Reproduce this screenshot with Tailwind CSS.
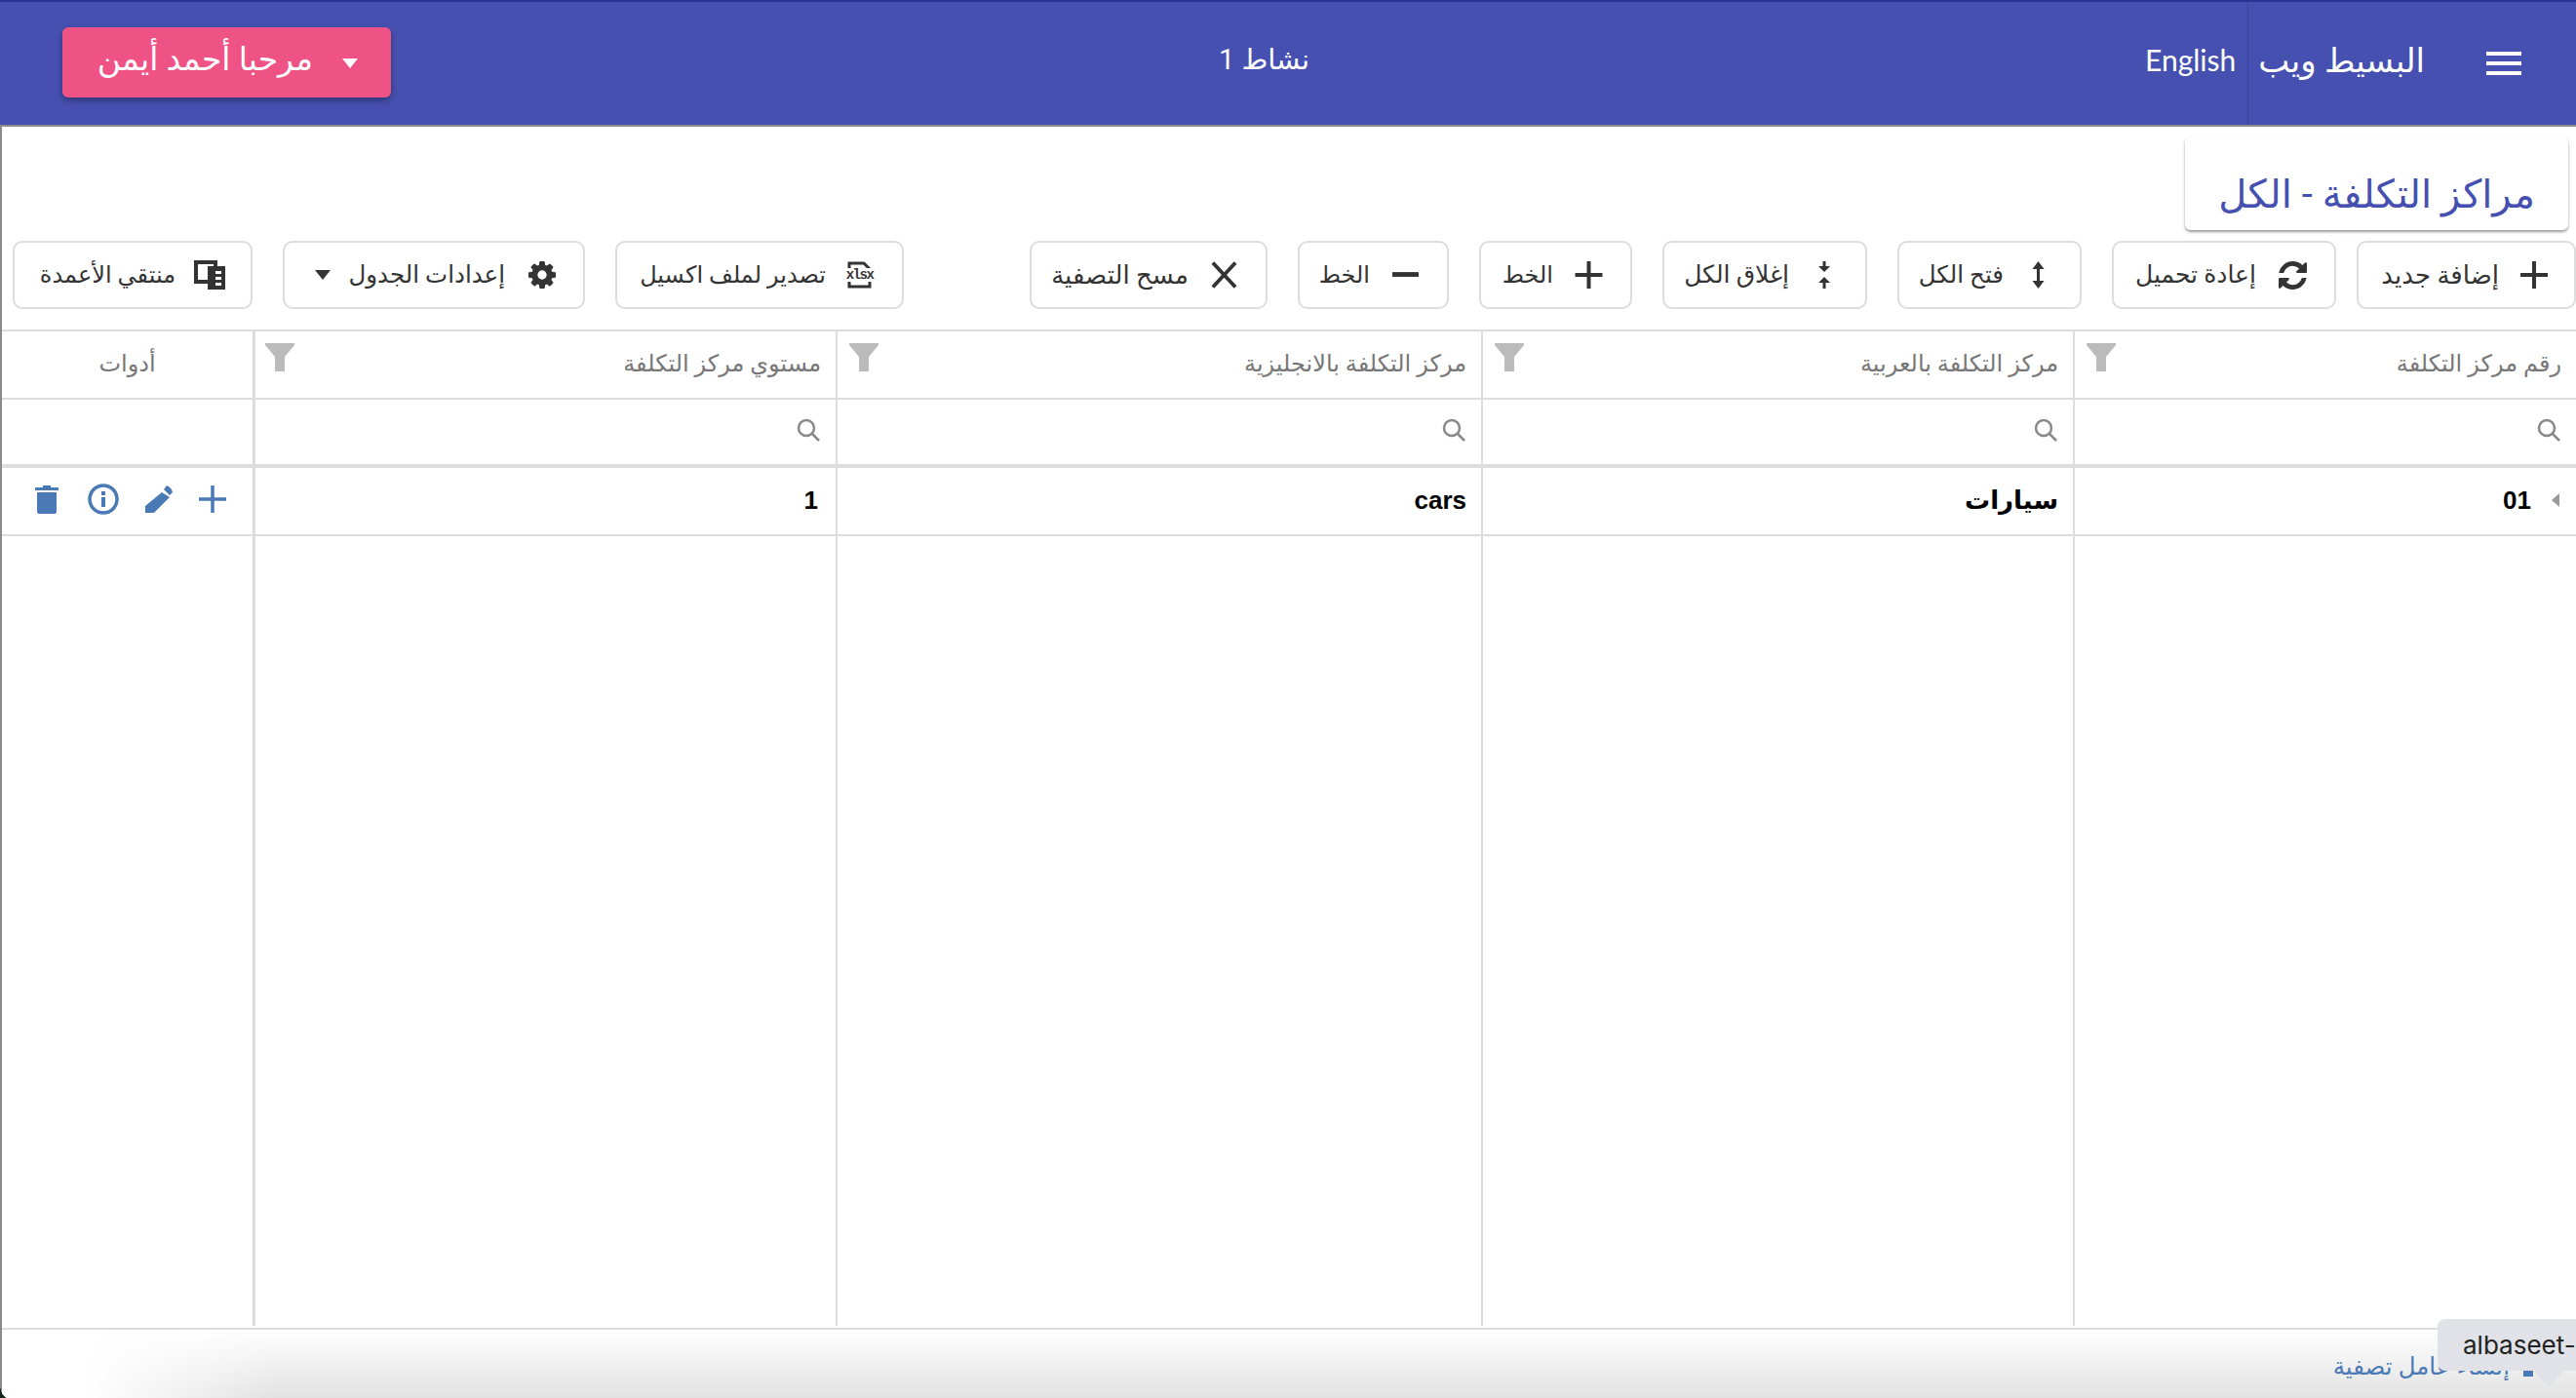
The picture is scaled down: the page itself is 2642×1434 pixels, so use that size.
<!DOCTYPE html>
<html lang="ar" dir="rtl">
<head>
<meta charset="utf-8">
<script src="https://cdn.jsdelivr.net/npm/@tailwindcss/browser@4"></script>
<title>مراكز التكلفة</title>
</head>
<body class="bg-white font-['Roboto','Noto_Sans','DejaVu_Sans',sans-serif]">
<div class="relative w-[2642px] h-[1434px] overflow-hidden bg-white">
  <!-- App bar -->
  <header class="h-[130px] bg-[#4550b0] border-t-2 border-t-[#2a3593] border-b-2 border-b-[#8a8a8a] flex items-center text-white">
    <button class="w-[92px] h-full flex items-center justify-start pr-[56px] shrink-0" aria-label="menu">
      <svg class="shrink-0" width="36" height="24" viewBox="0 0 36 24" fill="#fff"><rect width="36" height="4"/><rect y="10" width="36" height="4"/><rect y="20" width="36" height="4"/></svg>
    </button>
    <div class="text-[34px] leading-none mr-[63px] whitespace-nowrap w-[170px] text-center pb-[6px]">البسيط ويب</div>
    <div class="w-[1px] h-full bg-[#3a4498] mr-[11px]"></div>
    <div class="text-[30px] mr-[12px] whitespace-nowrap font-['Lato'] w-[93px] pb-[8px]" dir="ltr">English</div>
    <div class="text-[29px] mr-[857px] whitespace-nowrap w-[90px] text-center pb-[6px]">نشاط 1</div>
    <button class="mr-auto ml-[64px] mb-[2px] w-[337px] h-[72px] rounded-[6px] bg-[#ef5285] shadow-[0_3px_6px_rgba(0,0,0,0.35)] flex items-center justify-start pr-[34px] gap-[30px] text-[33px] whitespace-nowrap">
      <svg width="16" height="10" viewBox="0 0 16 10" fill="#fff" class="mt-[2px]"><path d="M0 0h16l-8 10z"/></svg>
      <span class="pb-[6px]">مرحبا أحمد أيمن</span>
    </button>
  </header>

  <main class="h-[1304px] border-l-2 border-l-[#8a8a8a] flex flex-col">
    <!-- Title -->
    <div class="pt-[10px] pr-[8px] flex">
      <div class="w-[393px] h-[96px] rounded-[6px] bg-white shadow-[0_2px_3px_rgba(0,0,0,0.4)] flex items-end justify-center pb-[16px] text-[40px] leading-none text-[#4550b0] whitespace-nowrap">مراكز التكلفة - الكل</div>
    </div>

    <!-- Toolbar -->
    <div class="mt-[11px] h-[70px] flex text-[24px] text-[#333]">
      <button class="w-[225px] h-full border-2 border-[#ddd] rounded-[10px] flex items-center justify-start pr-[27px] gap-[22px] whitespace-nowrap text-[26px]">
        <svg width="28" height="28" viewBox="0 0 28 28" fill="#333"><path d="M12 0h4v12h12v4H16v12h-4V16H0v-4h12z"/></svg><span>إضافة جديد</span>
      </button>
      <button class="w-[230px] mr-[21px] h-full border-2 border-[#ddd] rounded-[10px] flex items-center justify-start pr-[28px] gap-[23px] whitespace-nowrap text-[25px]">
        <svg width="29" height="29" viewBox="0 0 1536 1536" fill="#333"><path d="M1511 928q0 5-1 7-64 268-268 434.5t-478 166.5q-146 0-282.5-55t-243.5-157l-129 129q-19 19-45 19t-45-19-19-45v-448q0-26 19-45t45-19h448q26 0 45 19t19 45-19 45l-137 137q71 66 161 102t187 36q134 0 250-65t186-179q11-17 53-117 8-23 30-23h192q13 0 22.5 9.5t9.5 22.5zm25-800v448q0 26-19 45t-45 19h-448q-26 0-45-19t-19-45 19-45l138-138q-148-137-349-137-134 0-250 65t-186 179q-11 17-53 117-8 23-30 23h-199q-13 0-22.5-9.5t-9.5-22.5v-7q65-268 270-434.5t480-166.5q146 0 284 55.5t245 156.5l130-129q19-19 45-19t45 19 19 45z"/></svg><span>إعادة تحميل</span>
      </button>
      <button class="w-[189px] mr-[31px] h-full border-2 border-[#ddd] rounded-[10px] flex items-center justify-start pr-[36px] gap-[29px] whitespace-nowrap text-[24.5px]">
        <svg width="13" height="28" viewBox="0 0 12 28" fill="#333"><path d="M6 0l6 8H7.500v12H12l-6 8-6-8h4.500V8H0z"/></svg><span>فتح الكل</span>
      </button>
      <button class="w-[210px] mr-[31px] h-full border-2 border-[#ddd] rounded-[10px] flex items-center justify-start pr-[36px] gap-[30px] whitespace-nowrap text-[25px]">
        <svg width="12" height="28" viewBox="0 0 12 28" fill="#333"><path d="M4.500 0h3v5H12l-6 6-6-6h4.500zM6 16l6 6H7.500v6h-3v-6H0z"/></svg><span>إغلاق الكل</span>
      </button>
      <button class="w-[157px] mr-[31px] h-full border-2 border-[#ddd] rounded-[10px] flex items-center justify-start pr-[28px] gap-[22px] whitespace-nowrap">
        <svg width="29" height="28" viewBox="0 0 28 28" fill="#333"><path d="M12 0h4v12h12v4H16v12h-4V16H0v-4h12z"/></svg><span>الخط</span>
      </button>
      <button class="w-[155px] mr-[31px] h-full border-2 border-[#ddd] rounded-[10px] flex items-center justify-start pr-[29px] gap-[23px] whitespace-nowrap">
        <svg width="27" height="6" viewBox="0 0 28 6" fill="#333"><rect width="28" height="5"/></svg><span>الخط</span>
      </button>
      <button class="w-[244px] mr-[31px] h-full border-2 border-[#ddd] rounded-[10px] flex items-center justify-start pr-[29px] gap-[23px] whitespace-nowrap text-[26px]">
        <svg width="27" height="28" viewBox="0 0 28 28" fill="none" stroke="#333" stroke-width="4"><path d="M2 1l24 26M26 1L2 27"/></svg><span>مسح التصفية</span>
      </button>
      <button class="w-[296px] mr-[129px] h-full border-2 border-[#ddd] rounded-[10px] flex items-center justify-start pr-[30px] gap-[21px] whitespace-nowrap">
        <span class="relative w-[27px] h-[28px] shrink-0 flex items-center justify-center" dir="ltr">
          <svg class="absolute inset-0" width="27" height="28" viewBox="0 0 27 28" fill="none" stroke="#333" stroke-width="3"><path d="M3 8V2h15l6 6M24 20v6H3v-6"/></svg>
          <span class="relative bg-white text-[14px] leading-none font-['Liberation_Mono'] font-bold tracking-[-1.500px]">xlsx</span>
        </span>
        <span>تصدير لملف اكسيل</span>
      </button>
      <button class="w-[310px] mr-[31px] h-full border-2 border-[#ddd] rounded-[10px] flex items-center justify-start pr-[28px] gap-[24px] whitespace-nowrap text-[24.5px]">
        <svg width="28" height="28" viewBox="128 128 1536 1536" fill="#333"><path d="M1152 896q0-106-75-181t-181-75-181 75-75 181 75 181 181 75 181-75 75-181zm512-109v222q0 12-8 23t-20 13l-185 28q-19 54-39 91 35 50 107 138 10 12 10 25t-9 23q-27 37-99 108t-94 71q-12 0-26-9l-138-108q-44 23-91 38-16 136-29 186-7 28-36 28h-222q-14 0-24.500-8.500t-11.500-21.500l-28-184q-49-16-90-37l-141 107q-10 9-25 9-14 0-25-11-126-114-165-168-7-10-7-23 0-12 8-23 15-21 51-66.500t54-70.500q-27-50-41-99l-183-27q-13-2-21-12.500t-8-23.500v-222q0-12 8-23t19-13l186-28q14-46 39-92-40-57-107-138-10-12-10-24 0-10 9-23 26-36 98.500-107.500t94.500-71.500q13 0 26 10l138 107q44-23 91-38 16-136 29-186 7-28 36-28h222q14 0 24.500 8.500t11.500 21.500l28 184q49 16 90 37l142-107q9-9 24-9 13 0 25 10 129 119 165 170 7 8 7 22 0 12-8 23-15 21-51 66.500t-54 70.500q26 50 41 98l183 28q13 2 21 12.500t8 23.500z"/></svg>
        <span>إعدادات الجدول</span>
        <svg class="mr-[-6px]" width="16" height="10" viewBox="0 0 16 10" fill="#333"><path d="M0 0h16l-8 10z"/></svg>
      </button>
      <button class="w-[246px] mr-[31px] h-full border-2 border-[#ddd] rounded-[10px] flex items-center justify-start pr-[26px] gap-[19px] whitespace-nowrap">
        <svg width="32" height="30" viewBox="0 0 32 30" fill="#333"><path d="M0 0h24v6h8v24H14v-6H0zM4 4v16h10V6h6V4z"/><path d="M22 11h6v3h-6zM22 17h6v3h-6zM22 23h6v3h-6z" fill="#fff"/></svg>
        <span>منتقي الأعمدة</span>
      </button>
    </div>

    <!-- Table -->
    <div class="mt-[21px] flex-1 flex flex-col border-t-2 border-t-[#ddd]">
      <div class="h-[70px] grid grid-cols-[516px_607px_662px_598px_257px] border-b-2 border-b-[#ddd] text-[24px] text-[#777]">
        <div class="border-l-2 border-[#ddd] pr-[15px] pl-[12px] flex justify-between">
          <span class="self-center pb-[2px]">رقم مركز التكلفة</span>
          <svg class="mt-[12px]" width="30" height="29" viewBox="0 0 30 29" fill="#bbb"><path d="M0 0h30v2L20 14v15H10V14L0 2z"/></svg>
        </div>
        <div class="border-l-2 border-[#ddd] pr-[15px] pl-[12px] flex justify-between">
          <span class="self-center pb-[2px]">مركز التكلفة بالعربية</span>
          <svg class="mt-[12px]" width="30" height="29" viewBox="0 0 30 29" fill="#bbb"><path d="M0 0h30v2L20 14v15H10V14L0 2z"/></svg>
        </div>
        <div class="border-l-2 border-[#ddd] pr-[15px] pl-[12px] flex justify-between">
          <span class="self-center pb-[2px]">مركز التكلفة بالانجليزية</span>
          <svg class="mt-[12px]" width="30" height="29" viewBox="0 0 30 29" fill="#bbb"><path d="M0 0h30v2L20 14v15H10V14L0 2z"/></svg>
        </div>
        <div class="border-l-[3px] border-[#ddd] pr-[15px] pl-[10px] flex justify-between">
          <span class="self-center pb-[2px]">مستوي مركز التكلفة</span>
          <svg class="mt-[12px]" width="30" height="29" viewBox="0 0 30 29" fill="#bbb"><path d="M0 0h30v2L20 14v15H10V14L0 2z"/></svg>
        </div>
        <div class="flex items-center justify-center pb-[2px]">أدوات</div>
      </div>

      <div class="h-[70px] grid grid-cols-[516px_607px_662px_598px_257px] border-b-4 border-b-[#ddd]">
        <div class="border-l-2 border-[#ddd] pr-[16px] pb-[5px] flex items-center"><svg width="24" height="24" viewBox="0 0 24 24" fill="none" stroke="#888" stroke-width="2.500"><circle cx="10" cy="10" r="8"/><path d="M15.500 15.500L23 23"/></svg></div>
        <div class="border-l-2 border-[#ddd] pr-[16px] pb-[5px] flex items-center"><svg width="24" height="24" viewBox="0 0 24 24" fill="none" stroke="#888" stroke-width="2.500"><circle cx="10" cy="10" r="8"/><path d="M15.500 15.500L23 23"/></svg></div>
        <div class="border-l-2 border-[#ddd] pr-[16px] pb-[5px] flex items-center"><svg width="24" height="24" viewBox="0 0 24 24" fill="none" stroke="#888" stroke-width="2.500"><circle cx="10" cy="10" r="8"/><path d="M15.500 15.500L23 23"/></svg></div>
        <div class="border-l-[3px] border-[#ddd] pr-[16px] pb-[5px] flex items-center"><svg width="24" height="24" viewBox="0 0 24 24" fill="none" stroke="#888" stroke-width="2.500"><circle cx="10" cy="10" r="8"/><path d="M15.500 15.500L23 23"/></svg></div>
        <div></div>
      </div>

      <div class="h-[70px] grid grid-cols-[516px_607px_662px_598px_257px] border-b-2 border-b-[#ddd] text-[26px] font-bold text-black font-['Liberation_Sans','DejaVu_Sans',sans-serif]">
        <div class="border-l-2 border-[#ddd] pr-[17px] pb-[2px] flex items-center gap-[21px]">
          <svg width="8" height="14" viewBox="0 0 8 14" fill="#999"><path d="M8 0v14L0 7z"/></svg>
          <span>01</span>
        </div>
        <div class="border-l-2 border-[#ddd] pr-[15px] pb-[2px] flex items-center">سيارات</div>
        <div class="border-l-2 border-[#ddd] pr-[15px] pb-[2px] flex items-center">cars</div>
        <div class="border-l-[3px] border-[#ddd] pr-[18px] pb-[2px] flex items-center">1</div>
        <div class="flex items-center pr-[27px] pb-[4px] gap-[27px]">
          <svg width="28" height="28" viewBox="0 0 28 28" fill="none" stroke="#4a7ab5" stroke-width="3.500"><path d="M14 0v28M0 14h28"/></svg>
          <svg width="28" height="28" viewBox="0 0 28 28" fill="#4a7ab5"><path d="M19 4l3-4q5 2 6 7l-3 3zM17 7l8 5L9 28H0v-7z"/></svg>
          <svg width="32" height="32" viewBox="0 0 32 32"><circle cx="16" cy="16" r="14" fill="none" stroke="#4a7ab5" stroke-width="3.500"/><rect x="14" y="14" width="4" height="10" fill="#4a7ab5"/><rect x="14" y="8" width="4" height="4" fill="#4a7ab5"/></svg>
          <svg class="mr-[3px]" width="24" height="29" viewBox="0 0 24 29" fill="#4a7ab5"><path d="M8 0h8v2h8v3H0V2h8zM2 7h20v20q0 2-2 2H4q-2 0-2-2z"/></svg>
        </div>
      </div>

      <div class="h-[810px] grid grid-cols-[516px_607px_662px_598px_257px]">
        <div class="border-l-2 border-[#ddd]"></div>
        <div class="border-l-2 border-[#ddd]"></div>
        <div class="border-l-2 border-[#ddd]"></div>
        <div class="border-l-[3px] border-[#ddd]"></div>
        <div></div>
      </div>

      <!-- Footer -->
      <div class="mt-[2px] flex-1 border-t-2 border-t-[#ddd] bg-[linear-gradient(to_right,#fff_85px,rgba(255,255,255,0)_280px),linear-gradient(to_bottom,#fff,#e2e2e2)] flex items-center pr-[44px] text-[24.5px] text-[#4a7ab5] whitespace-nowrap">
        <svg width="10" height="12" viewBox="0 0 10 12" fill="#4a7ab5" class="mt-[14px]"><rect width="10" height="12"/></svg>
        <span class="mr-[14px] mt-[6px]">إنشاء عامل تصفية</span>
      </div>
    </div>
  </main>

  <!-- Browser status tooltip -->
  <div class="absolute left-[2603px] top-[1396px] w-[22px] h-[22px] rotate-45 bg-[#e0e2e7] rounded-[3px]"></div>
  <div class="absolute left-[2500px] top-[1353px] w-[160px] h-[53px] rounded-[8px] bg-[#e0e2e7] text-[26px] leading-[53px] pl-[26px] text-[#222] font-['Inter']" dir="ltr">albaseet-</div>
  <div class="absolute left-0 bottom-0 w-[8px] h-[14px] bg-[radial-gradient(ellipse_8px_14px_at_100%_0,transparent_98%,#12241c_100%)]"></div>
</div>
</body>
</html>
